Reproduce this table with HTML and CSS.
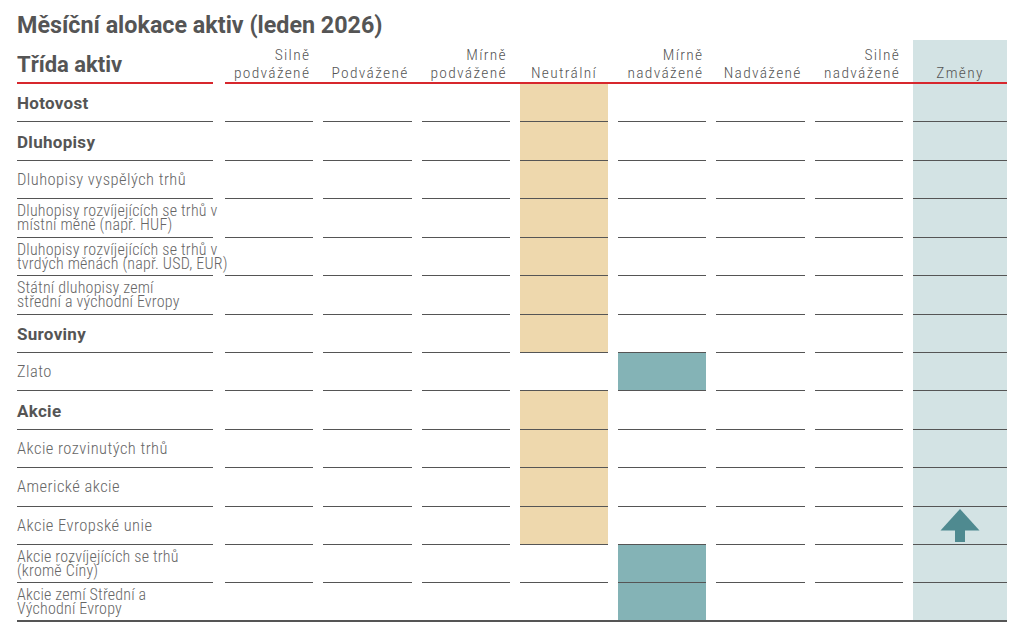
FILE: index.html
```html
<!DOCTYPE html>
<html lang="cs">
<head>
<meta charset="utf-8">
<title>Měsíční alokace aktiv</title>
<link rel="stylesheet" href="styles.css">
</head>
<body>
<div class="page">
  <h1 class="title">Měsíční alokace aktiv (leden 2026)</h1>
  <div class="table">
    <div class="row head">
      <div class="cell label"><span>Třída aktiv</span></div>
      <div class="cell hcol">Silně<br>podvážené</div>
      <div class="cell hcol">Podvážené</div>
      <div class="cell hcol">Mírně<br>podvážené</div>
      <div class="cell hcol center">Neutrální</div>
      <div class="cell hcol">Mírně<br>nadvážené</div>
      <div class="cell hcol">Nadvážené</div>
      <div class="cell hcol">Silně<br>nadvážené</div>
      <div class="cell hcol center chg">Změny</div>
    </div>

    <div class="row">
      <div class="cell label bold">Hotovost</div>
      <div class="cell"></div><div class="cell"></div><div class="cell"></div>
      <div class="cell neutral"></div>
      <div class="cell"></div><div class="cell"></div><div class="cell"></div>
      <div class="cell chg"></div>
    </div>
    <div class="row">
      <div class="cell label bold">Dluhopisy</div>
      <div class="cell"></div><div class="cell"></div><div class="cell"></div>
      <div class="cell neutral"></div>
      <div class="cell"></div><div class="cell"></div><div class="cell"></div>
      <div class="cell chg"></div>
    </div>
    <div class="row">
      <div class="cell label">Dluhopisy vyspělých trhů</div>
      <div class="cell"></div><div class="cell"></div><div class="cell"></div>
      <div class="cell neutral"></div>
      <div class="cell"></div><div class="cell"></div><div class="cell"></div>
      <div class="cell chg"></div>
    </div>
    <div class="row">
      <div class="cell label two">Dluhopisy rozvíjejících se trhů v<br>místní měně (např. HUF)</div>
      <div class="cell"></div><div class="cell"></div><div class="cell"></div>
      <div class="cell neutral"></div>
      <div class="cell"></div><div class="cell"></div><div class="cell"></div>
      <div class="cell chg"></div>
    </div>
    <div class="row">
      <div class="cell label two">Dluhopisy rozvíjejících se trhů v<br>tvrdých měnách (např. USD, EUR)</div>
      <div class="cell"></div><div class="cell"></div><div class="cell"></div>
      <div class="cell neutral"></div>
      <div class="cell"></div><div class="cell"></div><div class="cell"></div>
      <div class="cell chg"></div>
    </div>
    <div class="row">
      <div class="cell label two">Státní dluhopisy zemí<br>střední a východní Evropy</div>
      <div class="cell"></div><div class="cell"></div><div class="cell"></div>
      <div class="cell neutral"></div>
      <div class="cell"></div><div class="cell"></div><div class="cell"></div>
      <div class="cell chg"></div>
    </div>
    <div class="row">
      <div class="cell label bold">Suroviny</div>
      <div class="cell"></div><div class="cell"></div><div class="cell"></div>
      <div class="cell neutral"></div>
      <div class="cell"></div><div class="cell"></div><div class="cell"></div>
      <div class="cell chg"></div>
    </div>
    <div class="row">
      <div class="cell label">Zlato</div>
      <div class="cell"></div><div class="cell"></div><div class="cell"></div>
      <div class="cell"></div>
      <div class="cell over"></div><div class="cell"></div><div class="cell"></div>
      <div class="cell chg"></div>
    </div>
    <div class="row">
      <div class="cell label bold">Akcie</div>
      <div class="cell"></div><div class="cell"></div><div class="cell"></div>
      <div class="cell neutral"></div>
      <div class="cell"></div><div class="cell"></div><div class="cell"></div>
      <div class="cell chg"></div>
    </div>
    <div class="row">
      <div class="cell label">Akcie rozvinutých trhů</div>
      <div class="cell"></div><div class="cell"></div><div class="cell"></div>
      <div class="cell neutral"></div>
      <div class="cell"></div><div class="cell"></div><div class="cell"></div>
      <div class="cell chg"></div>
    </div>
    <div class="row">
      <div class="cell label">Americké akcie</div>
      <div class="cell"></div><div class="cell"></div><div class="cell"></div>
      <div class="cell neutral"></div>
      <div class="cell"></div><div class="cell"></div><div class="cell"></div>
      <div class="cell chg"></div>
    </div>
    <div class="row">
      <div class="cell label">Akcie Evropské unie</div>
      <div class="cell"></div><div class="cell"></div><div class="cell"></div>
      <div class="cell neutral"></div>
      <div class="cell"></div><div class="cell"></div><div class="cell"></div>
      <div class="cell chg arrow-cell">
        <svg class="arrow" width="40" height="33" viewBox="0 0 40 33"><polygon points="20,0 39.5,21.5 0.5,21.5" fill="#4f8a90"/><rect x="15" y="21" width="10" height="12" fill="#4f8a90"/></svg>
      </div>
    </div>
    <div class="row">
      <div class="cell label two">Akcie rozvíjejících se trhů<br>(kromě Číny)</div>
      <div class="cell"></div><div class="cell"></div><div class="cell"></div>
      <div class="cell"></div>
      <div class="cell over"></div><div class="cell"></div><div class="cell"></div>
      <div class="cell chg"></div>
    </div>
    <div class="row last">
      <div class="cell label two">Akcie zemí Střední a<br>Východní Evropy</div>
      <div class="cell"></div><div class="cell"></div><div class="cell"></div>
      <div class="cell"></div>
      <div class="cell over"></div><div class="cell"></div><div class="cell"></div>
      <div class="cell chg"></div>
    </div>
  </div>
</div>
</body>
</html>
```

FILE: styles.css
```css
html, body {
  margin: 0;
  padding: 0;
  background: #ffffff;
}

body {
  font-family: Roboto, "Liberation Sans", sans-serif;
  color: #555555;
}

.page {
  width: 1024px;
  box-sizing: border-box;
  padding: 12px 17px 0 17px;
}

.title {
  margin: 0 0 2px 0;
  font-size: 23.3px;
  line-height: 26px;
  font-weight: 700;
  color: #555555;
}

.table {
  width: 990px;
  border-bottom: 2px solid #555555;
}

.row {
  display: grid;
  grid-template-columns: 198px repeat(7, 88.3px) 94px;
  column-gap: 10px;
  height: 38.43px;
}

.cell {
  box-sizing: border-box;
  border-bottom: 1.5px solid #555555;
}

.row.last {
  height: 36.5px;
}

.row.last .cell {
  border-bottom: none;
}

.label {
  margin-right: 2px;
  display: flex;
  align-items: center;
  white-space: nowrap;
  font-family: "Roboto Condensed", Roboto, sans-serif;
  font-stretch: condensed;
  font-weight: 300;
  font-size: 16.5px;
  letter-spacing: 0.45px;
  line-height: 14px;
  color: #666666;
  padding-top: 1px;
}

.label.two {
  font-size: 16px;
  letter-spacing: 0.2px;
  line-height: 14px;
}

.label.bold {
  font-family: Roboto, sans-serif;
  font-stretch: normal;
  font-weight: 700;
  font-size: 17px;
  letter-spacing: 0.3px;
  color: #555555;
  line-height: 18px;
}

.head {
  height: 44px;
  background: linear-gradient(#d7272d, #d7272d) no-repeat right bottom / 782px 2px;
}

.head .cell {
  border-bottom: 2px solid transparent;
}

.head .label {
  border-bottom: 2px solid #d7272d;
  align-items: flex-end;
  padding-bottom: 4px;
  font-family: Roboto, sans-serif;
  font-stretch: normal;
  font-weight: 700;
  font-size: 22px;
  letter-spacing: 0;
  line-height: 26px;
  color: #555555;
}

.hcol {
  display: flex;
  flex-direction: column;
  justify-content: flex-end;
  text-align: right;
  white-space: nowrap;
  padding: 0 3px 0 0;
  font-family: "Roboto Condensed", Roboto, sans-serif;
  font-stretch: condensed;
  font-weight: 300;
  font-size: 15.5px;
  line-height: 18px;
  letter-spacing: 1.3px;
  color: #555555;
}

.hcol.center {
  text-align: center;
  padding-right: 0;
}

.head .chg {
  border-bottom: 2px solid #d7272d;
}

.neutral {
  background: #eed8ad;
}

.over {
  background: #84b3b6;
}

.chg {
  background: #d3e3e4;
}

.arrow-cell {
  display: flex;
  align-items: center;
  justify-content: center;
}

.arrow {
  display: block;
}
```
